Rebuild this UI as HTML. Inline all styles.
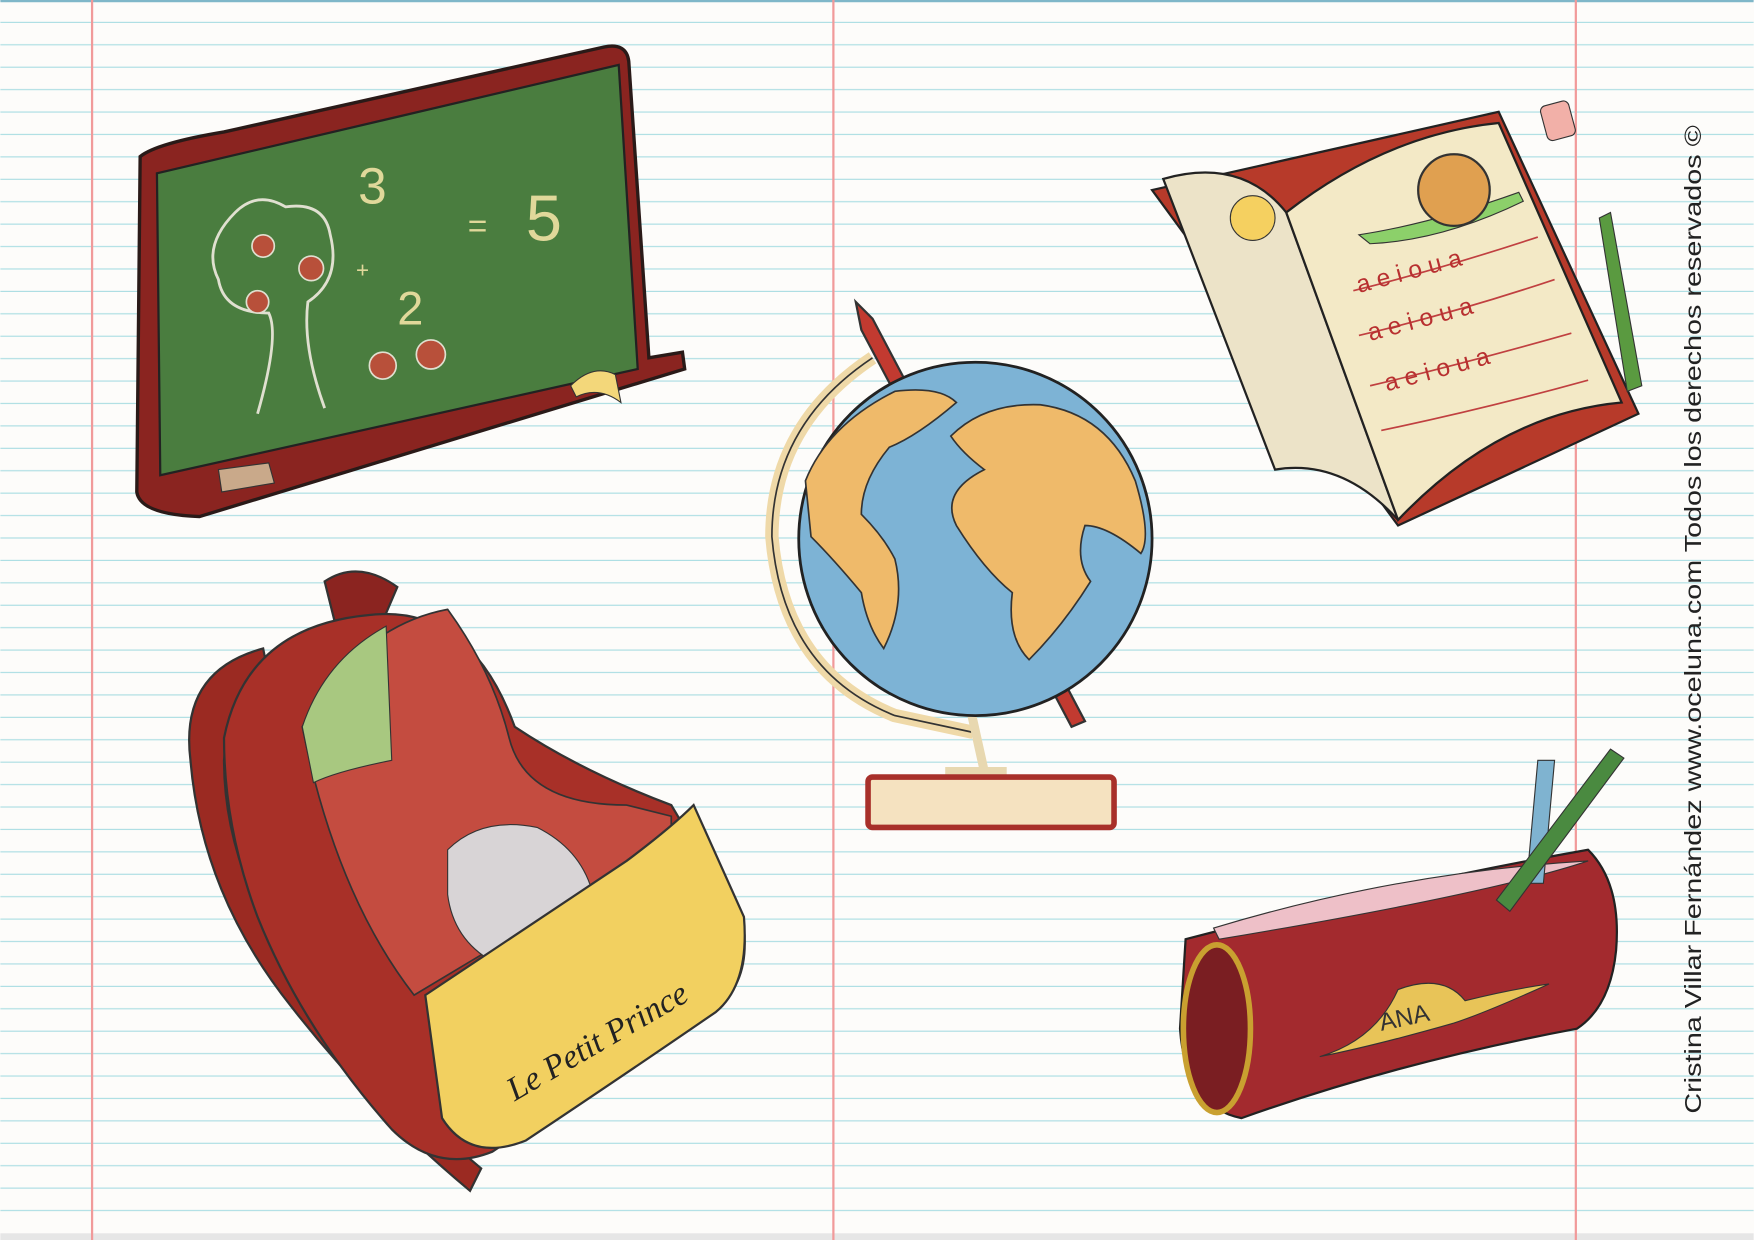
<!DOCTYPE html>
<html><head><meta charset="utf-8"><style>html,body{margin:0;padding:0;width:1754px;height:1240px;overflow:hidden;background:#fdfcfa}</style></head>
<body>
<svg width="1754" height="1240" viewBox="0 0 1568 1109" xmlns="http://www.w3.org/2000/svg" font-family="Liberation Sans, sans-serif">
<defs>
<pattern id="ln" x="0" y="0.5" width="1568" height="20.05" patternUnits="userSpaceOnUse">
<rect x="0" y="19" width="1568" height="1" fill="#a9dde2"/>
</pattern>
</defs>
<rect width="1568" height="1109" fill="#fdfcfa"/>
<rect y="0" width="1568" height="1100" fill="url(#ln)"/>
<rect width="1568" height="2" fill="#7fb7c9"/>
<rect y="1103" width="1568" height="6" fill="#e6e6e6"/>
<rect x="81" width="2" height="1109" fill="#f19a9a"/>
<rect x="744" width="2" height="1109" fill="#f19a9a"/>
<rect x="1408" width="2" height="1109" fill="#f19a9a"/>

<!-- blackboard -->
<path d="M125 140 Q140 128 200 118 L540 42 Q560 38 562 55 L580 320 L610 315 L612 330 L178 462 Q125 460 122 440 Z" fill="#8a2420" stroke="#2a1a18" stroke-width="3"/>
<path d="M140 155 L553 58 L570 330 L143 425 Z" fill="#4a7d3f" stroke="#222" stroke-width="2"/>
<g fill="none" stroke="#e8e0a0" stroke-width="2.5">
<text x="320" y="182" font-size="46" fill="#e0d89a" stroke="none">3</text>
<text x="355" y="290" font-size="42" fill="#e0d89a" stroke="none">2</text>
<text x="470" y="215" font-size="58" fill="#e0d89a" stroke="none">5</text>
<text x="418" y="212" font-size="30" fill="#e0d89a" stroke="none">=</text>
<text x="318" y="248" font-size="20" fill="#e0d89a" stroke="none">+</text>
<path d="M230 370 Q250 300 240 280 Q200 280 195 250 Q180 220 210 190 Q230 170 255 185 Q290 180 295 210 Q305 250 275 270 Q270 310 290 365" stroke="#e0e0d0"/>
</g>
<g fill="#b8503a" stroke="#e0e0d0" stroke-width="1.5"><circle cx="235" cy="220" r="10"/><circle cx="278" cy="240" r="11"/><circle cx="230" cy="270" r="10"/><circle cx="342" cy="327" r="12"/><circle cx="385" cy="317" r="13"/></g>
<path d="M195 420 L240 414 L245 432 L198 440 Z" fill="#c9a98a" stroke="#333"/>
<path d="M510 345 Q530 325 550 335 L555 360 Q535 345 515 355 Z" fill="#f3d77a" stroke="#333"/>

<!-- globe -->
<path d="M780 320 Q690 380 690 480 Q700 600 800 640 L870 655" fill="none" stroke="#efd9a8" stroke-width="12"/>
<path d="M780 320 Q690 380 690 480 Q700 600 800 640 L870 655" fill="none" stroke="#333" stroke-width="1.5"/>
<path d="M860 600 L880 690 M845 690 L900 690" stroke="#e8d8b0" stroke-width="8"/>
<path d="M765 270 L780 285 L970 645 L958 650 L770 295 Z" fill="#c23a30" stroke="#333" stroke-width="2"/>
<circle cx="872" cy="482" r="158" fill="#7db3d5" stroke="#222" stroke-width="2.5"/>
<path d="M850 390 Q880 360 930 362 Q990 370 1015 430 Q1030 480 1020 495 Q990 470 970 470 Q960 500 975 520 Q950 560 920 590 Q900 570 905 530 Q880 510 855 470 Q840 440 880 420 Q860 405 850 390 Z" fill="#efba6a" stroke="#333" stroke-width="1.5"/>
<path d="M720 430 Q740 380 800 350 Q840 345 855 360 Q820 390 795 400 Q770 430 770 460 Q790 480 800 500 Q810 540 790 580 Q775 560 770 530 Q745 500 725 480 Z" fill="#efba6a" stroke="#333" stroke-width="1.5"/>
<rect x="776" y="695" width="220" height="45" rx="4" fill="#f5e2c0" stroke="#a8302a" stroke-width="5"/>

<!-- book -->
<path d="M1030 170 L1340 100 L1465 370 L1250 470 Z" fill="#b73a2a" stroke="#222" stroke-width="2"/>
<path d="M1040 160 Q1110 140 1150 190 L1250 465 Q1200 410 1140 420 Z" fill="#ece3c8" stroke="#222" stroke-width="2"/>
<path d="M1150 190 Q1240 120 1340 110 L1450 360 Q1340 370 1250 465 Z" fill="#f3e9c6" stroke="#222" stroke-width="2"/>
<circle cx="1120" cy="195" r="20" fill="#f5d060" stroke="#333"/>
<path d="M1215 210 Q1280 200 1358 172 L1362 180 Q1290 215 1225 218 Z" fill="#8cd06a" stroke="#333"/>
<circle cx="1300" cy="170" r="32" fill="#e0a050" stroke="#333" stroke-width="2"/>
<g fill="none" stroke="#c04040" stroke-width="1.5"><path d="M1210 260 Q1290 240 1375 212"/><path d="M1215 300 Q1300 280 1390 250"/><path d="M1225 345 Q1310 325 1405 298"/><path d="M1235 385 Q1330 365 1420 340"/></g>
<g font-size="22" fill="#b83030"><text x="1215" y="262" transform="rotate(-15 1215 262)">a e i o u a</text><text x="1225" y="305" transform="rotate(-15 1225 305)">a e i o u a</text><text x="1240" y="350" transform="rotate(-15 1240 350)">a e i o u a</text></g>
<path d="M1430 195 L1440 190 L1468 345 L1455 350 Z" fill="#5a9a40" stroke="#333"/>
<rect x="1380" y="92" width="26" height="32" rx="5" fill="#f2b0a8" stroke="#333" transform="rotate(-15 1393 108)"/>

<!-- backpack -->
<path d="M235 580 Q160 600 170 680 Q180 800 260 900 Q330 990 420 1065 L430 1045 Q340 970 270 880 Q200 780 200 680 Q205 620 240 605 Z" fill="#9b2a22" stroke="#333" stroke-width="2"/>
<path d="M290 520 Q320 500 355 525 L340 560 L300 560 Z" fill="#8b2420" stroke="#333" stroke-width="2"/>
<path d="M200 660 Q220 560 330 550 Q420 540 460 650 Q520 690 600 720 L665 830 Q670 880 640 900 Q560 950 440 1030 Q390 1050 350 1010 Q270 920 230 820 Q200 740 200 660 Z" fill="#a83028" stroke="#333" stroke-width="2"/>
<path d="M270 650 Q320 560 400 545 Q440 600 455 660 Q470 720 560 720 L600 730 L600 760 Q520 800 420 860 L370 890 Q300 800 270 650 Z" fill="#c44c40" stroke="#333" stroke-width="1.5"/>
<path d="M400 760 Q430 730 480 740 Q520 760 530 800 L440 860 Q405 840 400 800 Z" fill="#d8d4d6" stroke="#333"/>
<path d="M270 650 Q290 590 345 560 L350 680 Q300 690 280 700 Z" fill="#a8c880" stroke="#333"/>
<path d="M380 890 Q470 830 560 770 Q600 740 620 720 L665 820 Q670 880 640 905 Q560 960 470 1020 Q420 1040 395 1000 Z" fill="#f2d060" stroke="#333" stroke-width="2"/>
<text x="460" y="985" font-size="30" font-family="Liberation Serif, serif" font-style="italic" fill="#222" transform="rotate(-30 460 985)">Le Petit Prince</text>

<!-- pencil case -->
<path d="M1060 840 Q1250 790 1420 760 Q1450 790 1445 850 Q1440 900 1410 920 Q1250 950 1110 1000 Q1060 990 1055 920 Z" fill="#a32a2e" stroke="#222" stroke-width="2"/>
<path d="M1085 830 Q1250 780 1420 770 Q1330 800 1090 840 Z" fill="#eec0c8" stroke="#333"/>
<path d="M1375 680 L1390 680 L1380 790 L1365 790 Z" fill="#7fb3d0" stroke="#333"/>
<path d="M1440 670 L1452 678 L1350 815 L1338 805 Z" fill="#4a8a40" stroke="#333"/>
<ellipse cx="1088" cy="920" rx="30" ry="75" fill="#7a1e22" stroke="#c9a030" stroke-width="5"/>
<path d="M1180 945 Q1230 930 1250 885 Q1290 870 1310 895 Q1350 885 1385 880 Q1330 905 1300 915 Q1230 935 1180 945 Z" fill="#e8c458" stroke="#333"/>
<text x="1235" y="922" font-size="22" fill="#333" transform="rotate(-12 1235 922)">ANA</text>

<text x="0" y="0" font-size="21" fill="#222" transform="translate(1521 996) rotate(-90)" textLength="884" lengthAdjust="spacingAndGlyphs">Cristina Villar Fernández   www.oceluna.com   Todos los derechos reservados ©</text>
</svg>
</body></html>
